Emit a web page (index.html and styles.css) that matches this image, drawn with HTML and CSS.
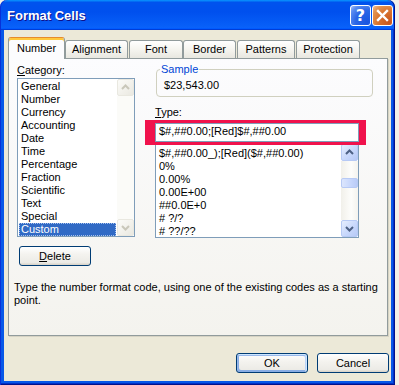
FILE: index.html
```html
<!DOCTYPE html>
<html>
<head>
<meta charset="utf-8">
<title>Format Cells</title>
<link rel="stylesheet" href="styles.css">
</head>
<body>
<div class="window">
  <div class="titlebar">
    <span class="title">Format Cells</span>
    <div class="caption-btns">
      <span class="cbtn help">?</span>
      <span class="cbtn close"><svg width="19" height="19" viewBox="0 0 19 19"><path d="M5 5 L14 14 M14 5 L5 14" stroke="#fff" stroke-width="2.4" stroke-linecap="square"/></svg></span>
    </div>
  </div>
  <div class="frame">
    <div class="client">
      <div class="tabs">
        <div class="tab sel t-number">Number</div>
        <div class="tab t-alignment">Alignment</div>
        <div class="tab t-font">Font</div>
        <div class="tab t-border">Border</div>
        <div class="tab t-patterns">Patterns</div>
        <div class="tab t-protection">Protection</div>
      </div>
      <div class="panel">
        <div class="toprow">
          <div class="leftcol">
            <div class="label"><u>C</u>ategory:</div>
            <div class="listbox cat">
              <div class="items">
                <div class="item">General</div>
                <div class="item">Number</div>
                <div class="item">Currency</div>
                <div class="item">Accounting</div>
                <div class="item">Date</div>
                <div class="item">Time</div>
                <div class="item">Percentage</div>
                <div class="item">Fraction</div>
                <div class="item">Scientific</div>
                <div class="item">Text</div>
                <div class="item">Special</div>
                <div class="item selected">Custom</div>
              </div>
              <div class="vscroll disabled">
                <div class="sbtn"><svg width="15" height="15" viewBox="0 0 15 15"><path d="M4 9 L7.5 5.5 L11 9" stroke="#C9C7BA" stroke-width="2" fill="none"/></svg></div>
                <div class="track"></div>
                <div class="sbtn"><svg width="15" height="15" viewBox="0 0 15 15"><path d="M4 6 L7.5 9.5 L11 6" stroke="#C9C7BA" stroke-width="2" fill="none"/></svg></div>
              </div>
            </div>
            <div class="btn delete"><u>D</u>elete</div>
          </div>
          <div class="rightcol">
            <fieldset class="group">
              <legend>Sample</legend>
              <div class="sample">$23,543.00</div>
            </fieldset>
            <div class="label type-label"><u>T</u>ype:</div>
            <div class="typewrap">
              <div class="textbox">$#,##0.00;[Red]$#,##0.00</div>
              <div class="annot"></div>
            </div>
            <div class="listbox typelist">
              <div class="items">
                <div class="item">$#,##0.00_);[Red]($#,##0.00)</div>
                <div class="item">0%</div>
                <div class="item">0.00%</div>
                <div class="item">0.00E+00</div>
                <div class="item">##0.0E+0</div>
                <div class="item"># ?/?</div>
                <div class="item"># ??/??</div>
              </div>
              <div class="vscroll">
                <div class="sbtn"><svg width="15" height="15" viewBox="0 0 15 15"><path d="M4 9 L7.5 5.5 L11 9" stroke="#4D6185" stroke-width="2" fill="none"/></svg></div>
                <div class="track"><div class="thumb"></div></div>
                <div class="sbtn"><svg width="15" height="15" viewBox="0 0 15 15"><path d="M4 6 L7.5 9.5 L11 6" stroke="#4D6185" stroke-width="2" fill="none"/></svg></div>
              </div>
            </div>
          </div>
        </div>
        <p class="desc">Type the number format code, using one of the existing codes as a starting point.</p>
      </div>
      <div class="buttons">
        <div class="btn default">OK</div>
        <div class="btn">Cancel</div>
      </div>
    </div>
  </div>
</div>
</body>
</html>
```
FILE: styles.css
```css
* { box-sizing: border-box; }
html, body { margin: 0; padding: 0; }
body {
  width: 399px;
  height: 385px;
  overflow: hidden;
  background: #F2F0E8;
  font-family: "Liberation Sans", Arial, sans-serif;
  font-size: 11px;
  line-height: 13px;
  color: #000;
}
u { text-decoration: underline; text-underline-offset: 1px; }

.window {
  width: 395px;
  height: 385px;
  display: flex;
  flex-direction: column;
}

.titlebar {
  height: 30px;
  flex: none;
  display: flex;
  align-items: flex-start;
  padding: 0 2px 0 7px;
  border-radius: 7px 7px 0 0;
  background: linear-gradient(180deg, #0997ff, #0053ee 8%, #0050ee 40%, #0860f8 88%, #0a62fa 93%, #005bff 95%, #003dd7 96%, #003dd7);
  box-shadow: inset 1px 0 #0831d9, inset -1px 0 #00138c;
}
.title {
  padding-top: 8px;
  font-weight: bold;
  font-size: 13px;
  line-height: 16px;
  color: #fff;
  text-shadow: 1px 1px #0f1089;
}
.caption-btns {
  margin-left: auto;
  margin-top: 5px;
  display: flex;
  gap: 1px;
}
.cbtn {
  width: 21px;
  height: 21px;
  border: 1px solid #fff;
  border-radius: 3px;
  display: flex;
  align-items: center;
  justify-content: center;
}
.help {
  background: radial-gradient(circle at 85% 85%, #1a55e0 0, #2a66e6 50%, #5a8cf0 80%, #a9c3f6 100%);
  color: #fff;
  font-weight: bold;
  font-size: 16px;
  line-height: 19px;
  font-family: "DejaVu Sans", "Liberation Sans", sans-serif;
}
.close {
  background: radial-gradient(circle at 85% 85%, #c8561e 0, #d9742f 50%, #e39553 80%, #f0c29c 100%);
}
.close svg { display: block; }

.frame {
  flex: 1;
  padding: 0 4px 4px 4px;
  background: #0758E8;
  box-shadow: inset 1px 0 #0831d9, inset -1px -1px #00138c, inset -2px -2px #0030c8;
  display: flex;
}
.client {
  flex: 1;
  background: #ECE9D8;
  padding: 7px 3px 0 4px;
  display: flex;
  flex-direction: column;
}

/* tabs */
.tabs {
  display: flex;
  align-items: flex-end;
  height: 21px;
  position: relative;
  z-index: 1;
}
.tab {
  height: 18px;
  border: 1px solid #919B9C;
  border-bottom: none;
  border-radius: 3px 3px 0 0;
  background: linear-gradient(#ffffff, #F3F2EC 60%, #E8E7E0);
  text-align: center;
  padding-top: 2px;
  white-space: nowrap;
}
.tab.sel {
  height: 22px;
  margin-bottom: -1px;
  border-top: 1px solid #E68B2C;
  box-shadow: inset 0 2px #FFC83C;
  background: #FCFCFE;
  padding-top: 4px;
}
.t-number { width: 57px; }
.t-alignment { width: 63px; }
.t-font { width: 54px; margin-left: 1px; }
.t-border { width: 53px; }
.t-patterns { width: 58px; margin-left: 1px; }
.t-protection { width: 64px; margin-left: 1px; }

/* panel */
.panel {
  height: 278px;
  border: 1px solid #919B9C;
  background: linear-gradient(#FCFCFE, #F4F3EE);
  box-shadow: 1px 1px 0 #D6D3C4;
}
.toprow {
  display: flex;
  padding-top: 4px;
}
.leftcol {
  margin-left: 8px;
  width: 118px;
  padding-top: 1px;
}
.rightcol {
  margin-left: 20px;
  width: 218px;
}
.label { height: 13px; }

.listbox {
  display: flex;
  border: 1px solid #7F9DB9;
  background: #fff;
  overflow: hidden;
}
.listbox .items {
  flex: 1;
  overflow: hidden;
}
.listbox.cat {
  margin-top: 1px;
  height: 159px;
}
.listbox.cat .items { padding: 1px 1px 0 1px; }
.listbox.cat .item { padding-left: 2px; height: 13px; }
.item.selected {
  background: #316AC5;
  color: #fff;
  outline: 1px dotted #A8C2EE;
  outline-offset: -1px;
}

.vscroll {
  width: 17px;
  flex: none;
  display: flex;
  flex-direction: column;
}
.sbtn {
  height: 17px;
  flex: none;
  border: 1px solid #B7CAF5;
  border-radius: 2px;
  background: linear-gradient(135deg, #E6EEFE, #C8D8FC 55%, #B6C9F6);
}
.sbtn svg { display: block; }
.track {
  flex: 1;
  background: linear-gradient(90deg, #F1F0EA, #FDFDFB 60%, #F4F3EE);
}
.thumb {
  margin-top: 17px;
  height: 10px;
  border: 1px solid #B7CAF5;
  border-radius: 2px;
  background: linear-gradient(90deg, #DCE6FD, #C6D6FC 60%, #B9CBF7);
}
.vscroll.disabled .sbtn {
  border-color: #E9E8E0;
  background: linear-gradient(135deg, #FBFBF8, #F1F0EA 60%, #E9E8E1);
}
.vscroll.disabled .track {
  background: #FBFBF8;
}

/* buttons */
.btn {
  width: 72px;
  height: 20px;
  border: 1px solid #003C74;
  border-radius: 3px;
  background: linear-gradient(180deg, #ffffff, #F4F3EF 40%, #ECEBE6 86%, #D6D0C5);
  display: flex;
  align-items: center;
  justify-content: center;
}
.btn.delete {
  margin-top: 9px;
  margin-left: 2px;
}
.btn.default {
  box-shadow: inset -1px 1px #cee7ff, inset 1px 2px #98b8ea, inset -2px 2px #bcd4f6, inset 1px -1px #89ade4, inset 2px -2px #89ade4;
}

/* sample group */
.group {
  margin: 0 0 0 1px;
  width: 217px;
  min-width: 0;
  border: 1px solid #D0D0BF;
  border-radius: 4px;
  padding: 3px 7px 4px 7px;
}
.group legend {
  color: #0046D5;
  padding: 0 1px;
  margin-left: -4px;
  line-height: 13px;
}
.sample { height: 13px; }

.type-label { margin-top: 9px; }
.typewrap {
  position: relative;
  margin-top: 4px;
  width: 204px;
}
.textbox {
  height: 19px;
  border: 1px solid #7F9DB9;
  background: #fff;
  padding: 1px 3px 0 3px;
  white-space: nowrap;
}
.annot {
  position: absolute;
  left: -10px;
  top: -3px;
  right: -7px;
  bottom: -3px;
  border-style: solid;
  border-color: #F0124C;
  border-width: 3px 7px 3px 10px;
  z-index: 2;
}
.listbox.typelist {
  margin-top: 1px;
  width: 204px;
  height: 95px;
}
.listbox.typelist .items { padding: 3px 0 0 3px; }
.listbox.typelist .item { height: 13px; white-space: nowrap; }

.desc {
  margin: 15px 0 0 5px;
}

.buttons {
  margin-top: 17px;
  margin-right: -1px;
  display: flex;
  justify-content: flex-end;
  gap: 9px;
}
```
